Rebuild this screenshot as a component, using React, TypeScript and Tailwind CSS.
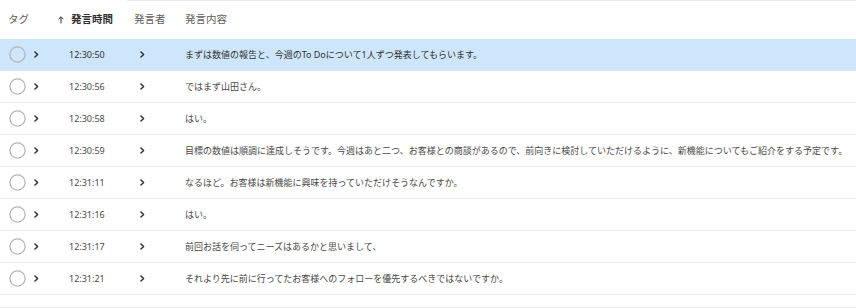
import React from "react";

const rows = [
  { t: "12:30:50", c: "まずは数値の報告と、今週のTo Doについて1人ずつ発表してもらいます。", sel: true },
  { t: "12:30:56", c: "ではまず山田さん。" },
  { t: "12:30:58", c: "はい。" },
  { t: "12:30:59", c: "目標の数値は順調に達成しそうです。今週はあと二つ、お客様との商談があるので、前向きに検討していただけるように、新機能についてもご紹介をする予定です。" },
  { t: "12:31:11", c: "なるほど。お客様は新機能に興味を持っていただけそうなんですか。" },
  { t: "12:31:16", c: "はい。" },
  { t: "12:31:17", c: "前回お話を伺ってニーズはあるかと思いまして、" },
  { t: "12:31:21", c: "それより先に前に行ってたお客様へのフォローを優先するべきではないですか。" },
];

function Chevron() {
  return (
    <svg width="5" height="7" viewBox="0 0 5 7" className="block">
      <polyline points="1,1 3.6,3.5 1,6" fill="none" stroke="#323130" strokeWidth="1.5" strokeLinecap="round" strokeLinejoin="round" />
    </svg>
  );
}

function Circle() {
  return (
    <svg width="17" height="17" viewBox="0 0 17 17" className="block">
      <circle cx="8.5" cy="8.5" r="7.6" fill="none" stroke="#b8b6b4" strokeWidth="1.3" />
    </svg>
  );
}

export default function App() {
  return (
    <div
      className="w-[856px] h-[308px] bg-white overflow-hidden flex flex-col"
      style={{ fontFamily: '"Noto Sans", "Noto Sans CJK JP", sans-serif' }}
    >
      <div className="h-px ml-[127px] bg-[#ececec] shrink-0" />
      <div className="h-[38px] shrink-0 flex items-center text-[10.5px] text-[#605e5c]">
        <div className="w-[58px] pl-[8px]">タグ</div>
        <div className="w-[76px] flex items-center">
          <svg width="6" height="8" viewBox="0 0 6 8" className="block mr-[7px] -mt-[1px]">
            <path d="M3 7.5V0.8M0.6 3.2L3 0.8L5.4 3.2" fill="none" stroke="#323130" strokeWidth="1" />
          </svg>
          <span className="font-semibold text-[#323130]">発言時間</span>
        </div>
        <div className="w-[51px]">発言者</div>
        <div className="flex-1">発言内容</div>
      </div>
      {rows.map((r, i) => (
        <div
          key={i}
          className={
            "h-[32px] shrink-0 flex items-center text-[9px] border-b " +
            (r.sel ? "bg-[#cde6fb] border-[#d3e3ef] text-[#323130]" : "bg-white border-[#ececec] text-[#4a4846]")
          }
        >
          <div className="w-[69px] flex items-center">
            <div className="ml-[9px]">
              <Circle />
            </div>
            <div className="ml-[8px]">
              <Chevron />
            </div>
          </div>
          <div className="w-[71px]">{r.t}</div>
          <div className="w-[45px]">
            <Chevron />
          </div>
          <div className="flex-1 whitespace-nowrap">{r.c}</div>
        </div>
      ))}
      <div className="flex-1" />
      <div className="h-px bg-[#e6e6e6] shrink-0" />
    </div>
  );
}
